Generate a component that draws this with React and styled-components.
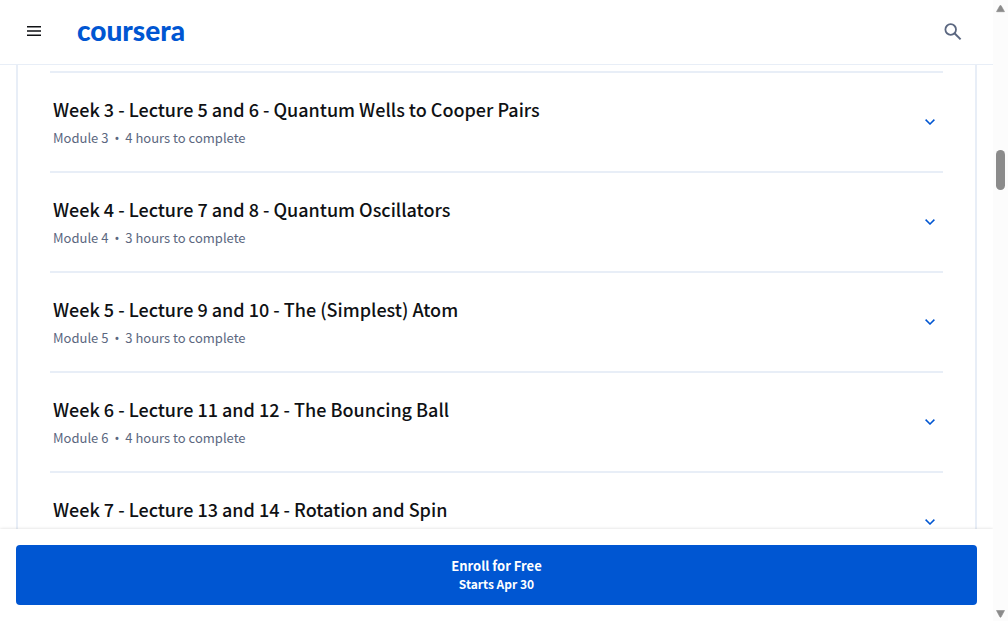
import React from "react";
import styled, { createGlobalStyle } from "styled-components";

const GlobalStyle = createGlobalStyle`
  * { box-sizing: border-box; }
  body {
    margin: 0;
    background: #fff;
    color: #0f1114;
    font-family: "Source Sans Pro", "Noto Sans CJK SC", sans-serif;
  }
  button { font: inherit; color: inherit; border: 0; margin: 0; cursor: pointer; }
`;

const Window = styled.div`
  display: grid;
  grid-template-columns: minmax(0, 1fr) 15px;
  height: 100vh;
`;

const Page = styled.div`
  display: flex;
  flex-direction: column;
  min-height: 0;
`;

const Header = styled.header`
  display: flex;
  align-items: center;
  flex: none;
  height: 65px;
  padding: 0 28px 0 24px;
  border-bottom: 1px solid #e8eef7;
`;

const IconButton = styled.button`
  display: flex;
  align-items: center;
  justify-content: center;
  padding: 0;
  width: ${(p) => p.$size}px;
  height: ${(p) => p.$size}px;
  background: none;
  color: ${(p) => p.$color};
`;

const Logo = styled.a`
  margin: 0 auto 0 33px;
  padding-bottom: 4px;
  color: #0056d2;
  font-family: Lato, sans-serif;
  font-size: 28px;
  font-weight: 900;
  line-height: 32px;
  text-decoration: none;
`;

const Main = styled.main`
  flex: 1;
  min-height: 0;
  overflow: hidden;
  padding: 0 16px;
`;

const ModuleList = styled.ul`
  list-style: none;
  margin: 0;
  padding: 6px 32px 0;
  border: solid #e8eef7;
  border-width: 0 2px;
`;

const ModuleItem = styled.li`
  border-top: 2px solid #e8eef7;
`;

const ModuleToggle = styled.button`
  display: flex;
  align-items: center;
  justify-content: space-between;
  width: 100%;
  height: 98px;
  padding: 0 8px 0 3px;
  background: none;
  text-align: left;
`;

const ModuleText = styled.span`
  display: flex;
  flex-direction: column;
  align-self: flex-start;
  gap: 8px;
  padding-top: 24px;
`;

const Title = styled.span`
  font-size: 18px;
  font-weight: 500;
  line-height: 24px;
`;

const Meta = styled.span`
  display: flex;
  gap: 6px;
  color: #5b6780;
  font-size: 13px;
  line-height: 18px;
`;

const Dot = styled.span`
  font-family: "Noto Sans", sans-serif;
`;

const Footer = styled.footer`
  position: relative;
  flex: none;
  padding: 16px;
  background: #fff;
  box-shadow: 0 0 3px rgba(0, 0, 0, 0.16);
  clip-path: inset(-4px 0 0 0);
`;

const EnrollButton = styled.button`
  display: flex;
  flex-direction: column;
  align-items: center;
  justify-content: center;
  width: 100%;
  height: 60px;
  padding: 0;
  border-radius: 4px;
  background: #0056d2;
  color: #fff;
`;

const EnrollLine = styled.span`
  font-size: ${(p) => (p.$small ? 12 : 13)}px;
  font-weight: 700;
  line-height: 18px;
`;

const ScrollTrack = styled.div`
  display: flex;
  flex-direction: column;
  align-items: center;
  padding: 5px 0 3px;
  background: #fcfcfc;
  color: #8b8b8b;
`;

const ScrollRange = styled.div`
  flex: 1;
  padding-top: 137px;
`;

const Thumb = styled.div`
  width: 9px;
  height: 40px;
  border-radius: 5px;
  background: #8b8b8b;
`;

const modules = [
  { n: 3, title: "Week 3 - Lecture 5 and 6 - Quantum Wells to Cooper Pairs", hours: 4 },
  { n: 4, title: "Week 4 - Lecture 7 and 8 - Quantum Oscillators", hours: 3 },
  { n: 5, title: "Week 5 - Lecture 9 and 10 - The (Simplest) Atom", hours: 3 },
  { n: 6, title: "Week 6 - Lecture 11 and 12 - The Bouncing Ball", hours: 4 },
  { n: 7, title: "Week 7 - Lecture 13 and 14 - Rotation and Spin" },
];

const MenuIcon = () => (
  <svg width="14" height="12" viewBox="0 0 14 12" aria-hidden="true">
    <path d="M0 .8h14M0 5h14M0 9.2h14" stroke="currentColor" strokeWidth="1.6" />
  </svg>
);

const SearchIcon = () => (
  <svg width="18" height="18" viewBox="0 0 18 18" fill="none" stroke="currentColor" aria-hidden="true">
    <circle cx="6.7" cy="6.5" r="5.3" strokeWidth="1.8" />
    <path d="M10.5 10.3L16.6 16.4" strokeWidth="2" />
  </svg>
);

const Chevron = () => (
  <svg width="10" height="6" viewBox="0 0 10 6" fill="none" aria-hidden="true">
    <path d="M0.6 0.6L5 5L9.4 0.6" stroke="#0056d2" strokeWidth="1.5" />
  </svg>
);

const Arrow = ({ down }) => (
  <svg width="9" height="8" viewBox="0 0 9 8" aria-hidden="true">
    <path
      d={down ? "M0.5 0.5h8L5.2 6.8q-.7 1-1.4 0z" : "M0.5 6.7h8L5.2 .8q-.7-1-1.4 0z"}
      fill="currentColor"
      stroke="currentColor"
      strokeWidth="0.6"
      strokeLinejoin="round"
    />
  </svg>
);

export default function App() {
  return (
    <Window>
      <GlobalStyle />
      <Page>
        <Header>
          <IconButton type="button" aria-label="Menu" $size={20} $color="#0f1114">
            <MenuIcon />
          </IconButton>
          <Logo href="#">coursera</Logo>
          <IconButton type="button" aria-label="Search" $size={24} $color="#5b6780">
            <SearchIcon />
          </IconButton>
        </Header>
        <Main>
          <ModuleList>
            {modules.map((m) => (
              <ModuleItem key={m.n}>
                <ModuleToggle type="button" aria-expanded="false">
                  <ModuleText>
                    <Title>{m.title}</Title>
                    {m.hours && (
                      <Meta>
                        <span>Module {m.n}</span>
                        <Dot>•</Dot>
                        <span>{m.hours} hours to complete</span>
                      </Meta>
                    )}
                  </ModuleText>
                  <Chevron />
                </ModuleToggle>
              </ModuleItem>
            ))}
          </ModuleList>
        </Main>
        <Footer>
          <EnrollButton type="button">
            <EnrollLine>Enroll for Free</EnrollLine>
            <EnrollLine $small>Starts Apr 30</EnrollLine>
          </EnrollButton>
        </Footer>
      </Page>
      <ScrollTrack aria-hidden="true">
        <Arrow />
        <ScrollRange>
          <Thumb />
        </ScrollRange>
        <Arrow down />
      </ScrollTrack>
    </Window>
  );
}
